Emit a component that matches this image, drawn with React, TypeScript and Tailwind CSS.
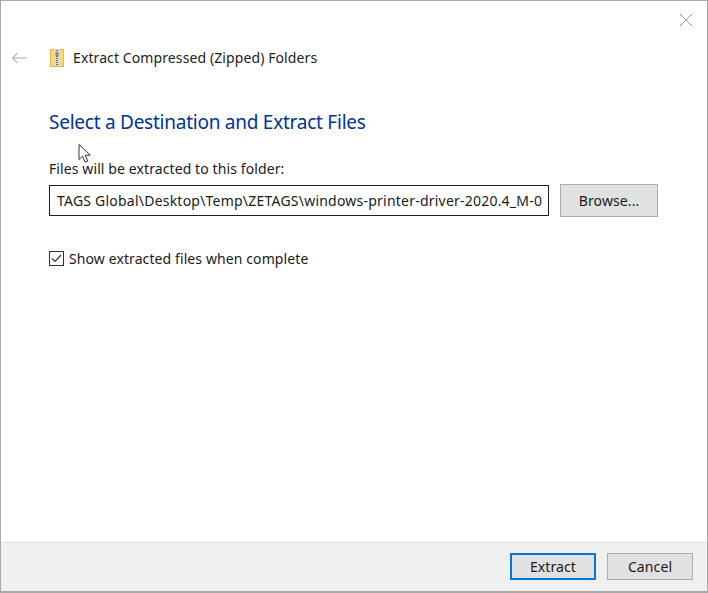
export default function App() {
  return (
    <div className="flex h-[593px] w-[708px] flex-col border border-b-2 border-[#a9a9a9] bg-white font-['Noto_Sans',sans-serif] text-[14px] text-[#1a1a1a]">
      <div className="relative flex-1">
        <button className="absolute right-[14px] top-[12px]">
          <svg width="14" height="14" viewBox="0 0 14 14" stroke="#9a9a9a" strokeWidth="1" fill="none">
            <path d="M1 1l12 12M13 1L1 13" />
          </svg>
        </button>

        {/* mouse pointer from the capture */}
        <svg className="absolute left-[76px] top-[142px]" width="16" height="21" viewBox="0 0 16 21">
          <path d="M2 1.5v15l3.6-3.3 2.6 6 2.6-1.1-2.6-5.9h5z" fill="#fff" stroke="#333" strokeWidth="1" />
        </svg>

        <div className="mt-[47px] flex h-[20px] items-center pl-[10px]">
          <svg width="16" height="12" viewBox="0 0 16 12" fill="none" stroke="#c4c4c4" strokeWidth="1.6">
            <path d="M16 6H1.5M6.5 1L1.5 6l5 5" />
          </svg>
          <svg className="ml-[23px]" width="14" height="18" viewBox="0 0 14 18">
            <rect x="0.5" y="0.5" width="13" height="17" fill="#f8d775" stroke="#e0b94f" />
            <rect x="4.5" y="0" width="5" height="17" fill="#d9d9d9" />
            <path d="M7 1v15" stroke="#6f6f6f" strokeWidth="2" strokeDasharray="1 1" />
            <rect x="5.5" y="3" width="3" height="4" fill="#8a8a8a" />
          </svg>
          <span className="ml-[9px] pb-[2px] text-[14px] tracking-[0.1px] text-[#222]">Extract Compressed (Zipped) Folders</span>
        </div>

        <div className="pl-[48px] pr-[49px]">
          <h1 className="mt-[41px] h-[26px] text-[19px] leading-[26px] tracking-[-0.25px] text-[#003399]">
            Select a Destination and Extract Files
          </h1>
          <p className="mt-[24px] h-[20px] leading-[20px] tracking-[0.1px]">Files will be extracted to this folder:</p>
          <div className="mt-[5px] flex items-center">
            <div className="h-[31px] w-[501px] overflow-hidden whitespace-nowrap border border-[#1f1f1f] pl-[7px] leading-[30px] tracking-[0.22px]">
              TAGS Global\Desktop\Temp\ZETAGS\windows-printer-driver-2020.4_M-0
            </div>
            <button className="ml-[11px] h-[33px] w-[98px] border border-[#adadad] bg-[#e1e1e1] tracking-[0.1px]">Browse...</button>
          </div>
          <label className="mt-[31px] flex items-center">
            <span className="flex h-[15px] w-[15px] items-center justify-center border border-[#333] bg-white">
              <svg width="11" height="9" viewBox="0 0 11 9" fill="none" stroke="#333" strokeWidth="1.2">
                <path d="M1 4.5l3 3 6-6.5" />
              </svg>
            </span>
            <span className="ml-[5px] tracking-[0.1px]">Show extracted files when complete</span>
          </label>
        </div>
      </div>

      <div className="flex h-[49px] items-center justify-end gap-[11px] border-t border-[#dfdfdf] bg-[#f0f0f0] pb-[2px] pr-[14px]">
        <button className="h-[27px] w-[86px] border-2 border-[#0078d7] bg-[#e1e1e1] tracking-[0.1px]">Extract</button>
        <button className="h-[27px] w-[86px] border border-[#adadad] bg-[#e1e1e1] tracking-[0.1px]">Cancel</button>
      </div>
    </div>
  )
}
